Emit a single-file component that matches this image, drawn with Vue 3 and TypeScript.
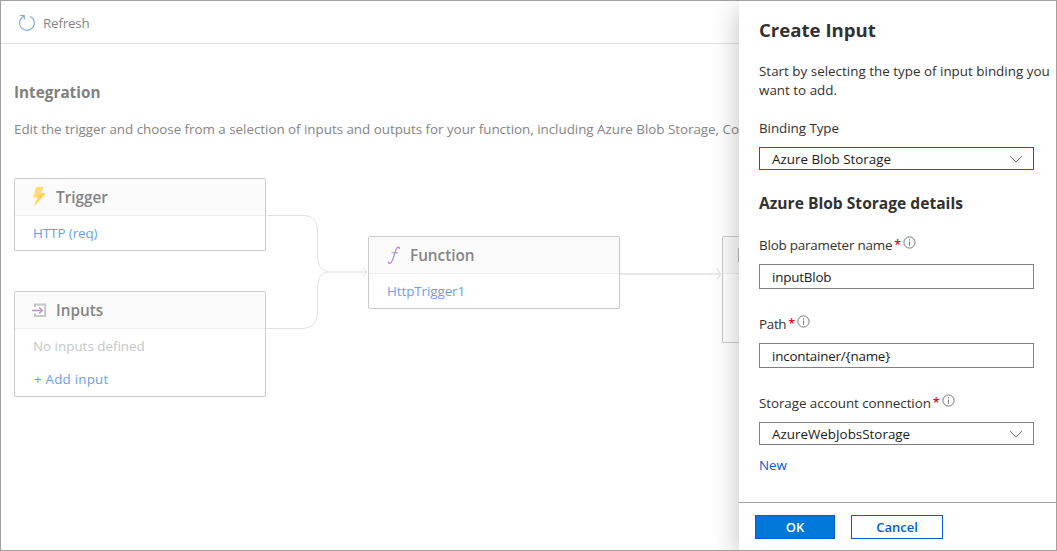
<script setup lang="ts">
interface Field {
  id: string
  label: string
  value: string
  kind: 'text' | 'select'
}

const fields: Field[] = [
  { id: 'blob', label: 'Blob parameter name', value: 'inputBlob', kind: 'text' },
  { id: 'path', label: 'Path', value: 'incontainer/{name}', kind: 'text' },
  { id: 'storage', label: 'Storage account connection', value: 'AzureWebJobsStorage', kind: 'select' },
]
</script>

<template>
  <div class="frame">
    <main class="page">
      <div class="toolbar">
        <svg class="refresh" width="18" height="18" viewBox="0 0 18 18">
          <path d="M5.700 2.300A7.400 7.400 0 1 0 12 2.200M2.100 1.500H6.300V5.400" />
        </svg>
        <span class="refresh-label">Refresh</span>
      </div>
      <h2 class="heading">Integration</h2>
      <p class="intro">Edit the trigger and choose from a selection of inputs and outputs for your function, including Azure Blob Storage, Co</p>

      <div class="canvas">
        <svg class="wires" width="740" height="240" viewBox="0 170 740 240">
          <path d="M267 215.500H304Q317.500 215.500 317.500 231V255Q317.500 271.500 328 271.500" />
          <path d="M266 328.500H304Q317.500 327 317.500 312V290Q317.500 272 328 272" />
          <path class="thick" d="M326 272H366.500" />
          <path d="M363 267.500L367 272L363 276.500" />
          <path class="thick" d="M620 273.800H720.500" />
          <path d="M717 268.500L720.500 274L717 279.500" />
        </svg>
        <section class="card trigger">
          <header>
            <svg class="bolt" width="13" height="20" viewBox="0 0 13 20">
              <path fill="#ffde70" d="M3.200 0H11L7.600 6.300H13L1 19.300L4.500 10.500H0Z" />
              <path fill="#fcd462" d="M7.600 6.300H13L1 19.300L5 10.200Z" />
            </svg>
            <span class="name">Trigger</span>
          </header>
          <a class="row">HTTP (req)</a>
        </section>
        <section class="card inputs">
          <header>
            <svg class="in-icon" width="16" height="15" viewBox="0 0 16 15">
              <path class="box" d="M3 4V1.500H13.200V13H3V10.500" />
              <path class="arrow" d="M0 7.500H10M7.200 4.500L10.300 7.500L7.200 10.500" />
            </svg>
            <span class="name">Inputs</span>
          </header>
          <span class="row muted">No inputs defined</span>
          <a class="row add">+ Add input</a>
        </section>
        <section class="card function">
          <header>
            <svg class="fn-icon" width="14" height="19" viewBox="0 0 14 19">
              <path d="M12.800 2.400C12.300.800 10.300.700 9.300 2.800C8.200 5.200 6.500 12.500 5 15.300C3.900 17.500 1.800 17.900 1 16.500" />
              <path class="bar" d="M4.600 6.800H11" />
              <circle cx="12.200" cy="2.300" r=".8" /><circle cx="1.500" cy="16.300" r=".8" />
            </svg>
            <span class="name">Function</span>
          </header>
          <a class="row">HttpTrigger1</a>
        </section>
        <section class="card outputs">
          <header><span class="out-icon"></span></header>
        </section>
      </div>
    </main>

    <aside class="panel">
      <div class="body">
        <h1>Create Input</h1>
        <p class="desc">Start by selecting the type of input binding you<br />want to add.</p>
        <div class="label">Binding Type</div>
        <div class="control select focused">
          <span class="value">Azure Blob Storage</span>
          <svg class="chevron" width="14" height="8" viewBox="0 0 14 8"><path d="M1 1L7 7L13 1" /></svg>
        </div>
        <h3>Azure Blob Storage details</h3>
        <div v-for="f in fields" :key="f.id" class="field" :class="f.id">
          <div class="label">
            <span class="text">{{ f.label }}</span><span class="req">*</span>
            <svg class="info" width="13" height="13" viewBox="0 0 13 13">
              <circle cx="6.500" cy="6.500" r="5.600" />
              <path d="M6.500 5.500V9.700M6.500 3.200V4.500" />
            </svg>
          </div>
          <div class="control" :class="f.kind">
            <span class="value">{{ f.value }}</span>
            <svg v-if="f.kind === 'select'" class="chevron" width="14" height="8" viewBox="0 0 14 8"><path d="M1 1L7 7L13 1" /></svg>
          </div>
        </div>
        <a class="new">New</a>
      </div>
      <footer>
        <button class="ok">OK</button>
        <button class="cancel">Cancel</button>
      </footer>
    </aside>
  </div>
</template>

<style>
body { margin: 0; }
</style>

<style scoped>
.frame {
  position: relative;
  box-sizing: border-box;
  width: 1057px;
  height: 551px;
  border: 1px solid #a0a0a0;
  display: flex;
  overflow: hidden;
  background: #fff;
  color: #323130;
  font-family: "Open Sans", "Noto Sans", sans-serif;
  font-size: 13.4px;
}
h1, h2, h3, p { margin: 0; white-space: nowrap; }
.page { width: 738px; flex: none; overflow: hidden; color: #858585; }
.toolbar {
  height: 42px;
  border-bottom: 1px solid #e3e3e3;
  display: flex;
  align-items: center;
  padding-left: 17px;
}
.refresh { margin-top: 2px; fill: none; stroke: #7ea8dc; stroke-width: 1.1; }
.refresh-label { margin-left: 7px; line-height: 20px; padding-top: 2px; letter-spacing: -.2px; }
.heading { margin: 36px 0 0 13px; font-size: 15.3px; line-height: 24px; font-weight: 700; color: #808080; }
.intro { margin: 15px 0 0 13px; line-height: 20px; letter-spacing: -.027px; }
.canvas { position: absolute; left: -1px; top: 169px; width: 739px; height: 240px; }
.wires { position: absolute; left: 0; top: 0; fill: none; stroke: #e2e2e2; stroke-width: 1; }
.wires .thick { stroke-width: 1.7; stroke: #e6e6e6; }
.card {
  position: absolute;
  box-sizing: border-box;
  width: 252px;
  border: 1px solid #cbcbcb;
  border-radius: 2px;
  background: #fff;
}
.trigger { left: 14px; top: 8px; height: 73px; }
.inputs { left: 14px; top: 121px; height: 106px; }
.function { left: 368px; top: 66px; height: 73px; }
.outputs { left: 722px; top: 66px; height: 107px; }
.card header {
  height: 36px;
  background: #fbfbfb;
  border-bottom: 1px solid #ececec;
  display: flex;
  align-items: center;
}
.bolt { margin: 0 0 0 18px; }
.in-icon { margin: 0 0 0 17px; fill: none; }
.in-icon .box { stroke: #c6c6c6; stroke-width: 2; }
.in-icon .arrow { stroke: #bc96c8; stroke-width: 1.3; }
.fn-icon { margin-left: 18px; fill: #b58dc5; }
.fn-icon path { fill: none; stroke: #b58dc5; stroke-width: 1.3; }
.fn-icon .bar { stroke-width: 1; }
.out-icon { margin-left: 15px; width: 16px; height: 14px; background: #bdbdbd; }
.name { margin-left: 9px; font-size: 15.3px; line-height: 22px; font-weight: 600; color: #858585; }
.trigger .name { margin-left: 10px; }
.inputs .name { margin-left: 8px; }
.row { display: block; line-height: 20px; margin: 7px 0 0 18px; color: #6b9fea; letter-spacing: -.08px; }
.muted { color: #c6c6c6; letter-spacing: 0; }
.row.add { margin: 13px 0 0 19px; letter-spacing: .2px; }
.panel {
  position: relative;
  width: 317px;
  flex: none;
  background: #fff;
  box-shadow: 0 7px 26px rgba(0, 0, 0, .25);
  display: flex;
  flex-direction: column;
}
.body { height: 486px; padding: 15px 0 0 20px; }
h1 { font-size: 18.6px; line-height: 28px; font-weight: 700; }
.desc { margin-top: 18px; line-height: 19px; letter-spacing: .01px; }
.desc + .label { margin-top: 18px; letter-spacing: -.05px; }
.label { display: flex; line-height: 20px; height: 20px; }
.control {
  box-sizing: border-box;
  width: 275px;
  height: 25px;
  margin-top: 9px;
  border: 1px solid #808084;
  padding: 0 10px 0 12px;
  display: flex;
  align-items: center;
  justify-content: space-between;
  color: #1b1a19;
}
.select { height: 23px; }
.focused { border-color: #015cda; }
.path .value { letter-spacing: -.2px; }
.chevron { fill: none; stroke: #777; stroke-width: 1; }
h3 { margin-top: 21px; font-size: 15.6px; line-height: 24px; font-weight: 700; }
h3 + .field { margin-top: 20px; }
.field { margin-top: 25px; }
.text { letter-spacing: -.2px; }
.storage .text { letter-spacing: -.07px; }
.path .text { letter-spacing: -.3px; }
.req { color: #e00b1c; margin-left: 2px; font-size: 12.5px; font-weight: 600; }
.info { margin: 1px 0 0 2px; fill: none; stroke: #777; stroke-width: 1; }
.new { display: block; margin-top: 10px; line-height: 20px; color: #015cda; }
footer {
  flex: 1;
  border-top: 1px solid #a0a0a0;
  padding: 12px 0 0 16px;
  display: flex;
  align-items: flex-start;
  gap: 16px;
}
button {
  box-sizing: border-box;
  height: 24px;
  padding: 0;
  border: 1px solid #015cda;
  font: 600 13px/20px "Open Sans", "Noto Sans", sans-serif;
}
.ok { width: 80px; background: #0078d7; color: #fff; }
.cancel { width: 92px; background: #fff; color: #015cda; }
</style>
